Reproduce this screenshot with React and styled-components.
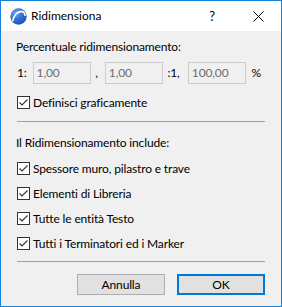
import React from "react";
import styled, { createGlobalStyle } from "styled-components";

const Global = createGlobalStyle`
  html, body { margin: 0; padding: 0; }
  body {
    width: 282px; height: 307px; overflow: hidden;
    font-family: Lato, "Noto Sans", sans-serif;
    font-variant-ligatures: none;
  }
`;

const Win = styled.div`
  box-sizing: border-box;
  width: 282px;
  height: 307px;
  border: 1px solid #1883d7;
  background: #f0f0f0;
  display: flex;
  flex-direction: column;
  font-size: 12px;
  letter-spacing: -0.15px;
  color: #000;
`;

const TitleBar = styled.div`
  height: 30px;
  background: #fff;
  display: flex;
  align-items: center;
  padding-left: 9px;
`;

const Title = styled.span`
  margin-left: 4px;
  flex: 1;
  font-size: 12px;
  letter-spacing: 0;
  position: relative;
  top: -1px;
`;

const TitleBtn = styled.div`
  width: 46px;
  height: 30px;
  display: flex;
  align-items: center;
  justify-content: center;
  font-size: 13px;
`;

const Body = styled.div`
  flex: 1;
  display: flex;
  flex-direction: column;
  padding: 8px 15px 0 15px;
`;

const Label = styled.div`
  height: 16px;
  line-height: 16px;
  margin-top: ${(p) => p.$mt || 0}px;
`;

const InputRow = styled.div`
  display: flex;
  align-items: center;
  margin-top: 7px;
  height: 22px;
`;

const Cell = styled.span`
  width: ${(p) => p.$w}px;
  padding-left: ${(p) => p.$pl || 0}px;
  box-sizing: border-box;
  line-height: 16px;
`;

const Field = styled.div`
  box-sizing: border-box;
  width: 60px;
  height: 22px;
  border: 1px solid #cccccc;
  background: #f0f0f0;
  color: #6d6d6d;
  padding-left: 3px;
  line-height: 20px;
`;

const CheckRow = styled.div`
  display: flex;
  align-items: center;
  height: 16px;
  margin-top: ${(p) => p.$mt || 0}px;
`;

const Box = styled.span`
  box-sizing: border-box;
  width: 13px;
  height: 13px;
  border: 1px solid #333;
  background: #fff;
  margin-left: 1px;
  margin-right: 3px;
  display: flex;
`;

const Sep = styled.div`
  height: 1px;
  background: #a0a0a0;
  margin: ${(p) => p.$mt}px 1px 0 1px;
`;

const CheckList = styled.div`
  display: flex;
  flex-direction: column;
  gap: 9px;
  margin-top: 9px;
`;

const Buttons = styled.div`
  display: flex;
  justify-content: flex-end;
  gap: 12px;
  margin-top: 12px;
  padding-right: 1px;
`;

const Button = styled.div`
  box-sizing: border-box;
  width: 88px;
  height: 21px;
  display: flex;
  align-items: center;
  justify-content: center;
  background: #e1e1e1;
  border: ${(p) => (p.$default ? "2px solid #0078d7" : "1px solid #adadad")};
`;

const Check = ({ children, mt }) => (
  <CheckRow $mt={mt}>
    <Box>
      <svg width="11" height="11" viewBox="0 0 11 11">
        <path d="M1.5 5.5 L4 8 L9.5 2.5" fill="none" stroke="#333" strokeWidth="1.1" />
      </svg>
    </Box>
    {children}
  </CheckRow>
);

const Logo = () => (
  <svg width="17" height="17" viewBox="0 0 16 16">
    <defs>
      <radialGradient id="lg" cx="0.35" cy="0.3" r="0.8">
        <stop offset="0" stopColor="#6fa3f0" />
        <stop offset="0.5" stopColor="#2f6fd8" />
        <stop offset="1" stopColor="#1d4fb0" />
      </radialGradient>
    </defs>
    <circle cx="8" cy="8" r="7.7" fill="url(#lg)" />
    <path d="M2.5 12.5 Q4.5 3.5 11 3.2 Q13.6 3.4 14.2 7.5" fill="none" stroke="#fff" strokeWidth="1.5" />
  </svg>
);

export default function App() {
  return (
    <>
      <Global />
      <Win>
        <TitleBar>
          <Logo />
          <Title>Ridimensiona</Title>
          <TitleBtn>?</TitleBtn>
          <TitleBtn>
            <svg width="11" height="11" viewBox="0 0 11 11">
              <path d="M0.5 0.5 L10.5 10.5 M10.5 0.5 L0.5 10.5" stroke="#000" strokeWidth="1" />
            </svg>
          </TitleBtn>
        </TitleBar>
        <Body>
          <Label>Percentuale ridimensionamento:</Label>
          <InputRow>
            <Cell $w={17} $pl={1}>1:</Cell>
            <Field>1,00</Field>
            <Cell $w={14} $pl={4}>,</Cell>
            <Field>1,00</Field>
            <Cell $w={25} $pl={4}>:1,</Cell>
            <Field>100,00</Field>
            <Cell $w={20} $pl={5}>%</Cell>
          </InputRow>
          <Check mt={10}>Definisci graficamente</Check>
          <Sep $mt={11} />
          <Label $mt={13}>Il Ridimensionamento include:</Label>
          <CheckList>
            <Check>Spessore muro, pilastro e trave</Check>
            <Check>Elementi di Libreria</Check>
            <Check>Tutte le entità Testo</Check>
            <Check>Tutti i Terminatori ed i Marker</Check>
          </CheckList>
          <Sep $mt={10} />
          <Buttons>
            <Button>Annulla</Button>
            <Button $default>OK</Button>
          </Buttons>
        </Body>
      </Win>
    </>
  );
}
